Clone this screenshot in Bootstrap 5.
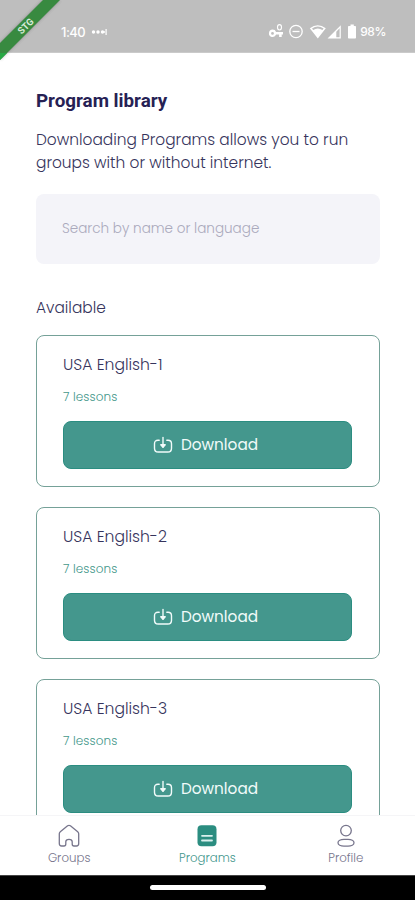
<!DOCTYPE html>
<html lang="en">
<head>
<meta charset="utf-8">
<meta name="viewport" content="width=device-width, initial-scale=1">
<title>Program library</title>
<link href="https://cdn.jsdelivr.net/npm/bootstrap@5.3.0/dist/css/bootstrap.min.css" rel="stylesheet">
<style>
  :root { --ink: #36345c; --teal: #44978d; --teal-dark: #2b8d81; }
  body { font-family: Poppins, Inter, sans-serif; font-weight: 300; color: var(--ink); }
  svg { display: block; flex: none; }
  .screen { height: 900px; }
  .status-bar { height: 53px; background: #bebebe; padding: 12px 29px 0 61px; border-bottom: 1px solid #cacaca; }
  .clock { font: 500 13px/1 Inter, sans-serif; letter-spacing: -.5px; width: 30px; }
  .battery-level { font: 500 12px/1 Inter, sans-serif; letter-spacing: -.4px; margin-left: 4px; }
  .ribbon { left: 0; top: 0; }
  .ribbon text { font: 700 9.5px Roboto, sans-serif; fill: #d9ead9; }
  .library { padding: 36px 35px 0 36px; min-height: 0; }
  .page-title { font: 700 18.8px/24px Roboto, sans-serif; color: #262154; margin-bottom: 15px; }
  .intro { font-size: 15.4px; line-height: 23px; margin-bottom: 20px; white-space: nowrap; }
  .search { height: 70px; border: 0; border-radius: 8px; background: #f4f4f9; padding: 0 26px 1px; font-size: 13.55px; font-weight: 300; margin-bottom: 32px; }
  .search:focus { background: #f4f4f9; }
  .search::placeholder { color: #aaa9bc; }
  .section-title { font-size: 15.4px; line-height: 24px; margin-bottom: 15px; }
  .program { height: 152px; border: 1px solid #75a198; border-radius: 8px; padding: 17px 27px 0 26px; margin-bottom: 20px; flex: none; }
  .program-name { font-size: 15.6px; line-height: 24px; font-weight: 300; margin-bottom: 11px; }
  .lessons { font-size: 12px; line-height: 18px; letter-spacing: .1px; color: #44978a; margin-bottom: 15px; }
  .btn-download { --bs-btn-color: #f1fbfa; --bs-btn-bg: var(--teal); --bs-btn-border-color: var(--teal-dark); --bs-btn-hover-color: #fff; --bs-btn-hover-bg: var(--teal-dark);
    --bs-btn-border-radius: 8px; height: 48px; font-size: 15.3px; font-weight: 400; padding: 0 4px 0 0; gap: 8px; }
  .tabs { height: 60px; border-top: 1px solid #f5f5f7; padding-top: 8px; flex: none; }
  .tab { font-size: 11.8px; line-height: 16px; color: #77758c; gap: 2px; text-decoration: none; }
  .tab.active { color: var(--teal); }
  .gesture-bar { height: 25px; flex: none; border-top: 1px solid #444; }
  .gesture-pill { width: 116px; height: 5px; margin-top: -2px; }
</style>
</head>
<body>
<svg class="d-none">
  <symbol id="download" viewBox="0 0 20 18">
    <g fill="none" stroke="currentColor" stroke-width="1.4" stroke-linecap="round" stroke-linejoin="round">
      <path d="M6.2 4.2H5C2.700 4.200 1.500 5.500 1.500 7.700V12.200C1.500 14.800 2.700 16 5.200 16H14.800C17.300 16 18.500 14.800 18.500 12.200V7.700C18.500 5.500 17.300 4.200 15 4.200H13.800"/>
      <path d="M10 1.500V11"/>
      <path d="M7.800 8.800H12.200L10 11.200z" fill="currentColor"/>
    </g>
  </symbol>
</svg>
<div class="screen d-flex flex-column overflow-hidden position-relative bg-white">
  <header class="status-bar d-flex align-items-center text-white flex-shrink-0">
    <span class="clock">1:40</span>
    <svg width="17" height="8" viewBox="0 0 17 8" fill="#fff"><circle cx="2.500" cy="4" r="1.700"/><circle cx="7" cy="4" r="1.700"/><circle cx="11.500" cy="4" r="1.700"/><path d="M13 3.300h1V4.700h-1zM14.500 1h1.200v6h-1.200z"/></svg>
    <svg class="ms-auto" width="88" height="18" viewBox="0 0 88 18" fill="#fff">
      <path fill-rule="evenodd" d="M4.500 6.600A3.700 3.700 0 0 1 8.100 9H15v2.600h-1.300V14h-2.600v-2.400h-3A3.700 3.700 0 1 1 4.500 6.600zM4.500 9a1.400 1.400 0 1 0 0 2.800 1.400 1.400 0 0 0 0-2.800z"/>
      <ellipse cx="11.500" cy="4.300" rx="2" ry="2.700" fill="none" stroke="#fff" stroke-width="1.100"/>
      <g fill="none" stroke="#fff" stroke-width="1.300"><circle cx="28" cy="8.500" r="6.200"/><path d="M24.500 8.500h7"/></g>
      <path fill-rule="evenodd" d="M41.800 5.200Q49.800-.8 57.800 5.200L49.800 15.500zM44 5.500L45.200 7Q49.800 3.900 54.400 7L55.600 5.500Q49.800 1.600 44 5.500z"/>
      <path fill-rule="evenodd" d="M59.500 15.500L72.800 2.200V15.500zM68.300 8.700V14.300H71.600V5.200z"/>
      <path d="M82.500 1.500h3.300v1.400h1.400q.8 0 .8.800v11q0 .8-.8.800h-6.400q-.8 0-.8-.8v-11q0-.8.8-.8h1.700z"/>
    </svg>
    <span class="battery-level">98%</span>
  </header>

  <svg class="ribbon position-absolute" width="64" height="64" viewBox="0 0 64 64">
    <defs><filter id="soft" x="-20%" y="-20%" width="140%" height="140%"><feGaussianBlur stdDeviation="1.800"/></filter></defs>
    <path d="M0 43L43 0H60L0 60z" fill="#555" opacity=".5" filter="url(#soft)"/>
    <path d="M0 43L43 0H60L0 60z" fill="#388a40"/>
    <path d="M0 53H7L0 60z" fill="#27a844"/>
    <text transform="translate(25.500 26.000) rotate(-45)" text-anchor="middle" dominant-baseline="central">STG</text>
  </svg>

  <main class="library flex-fill overflow-hidden d-flex flex-column">
    <h1 class="page-title">Program library</h1>
    <p class="intro">Downloading Programs allows you to run<br>groups with or without internet.</p>
    <input class="form-control search flex-shrink-0" type="search" placeholder="Search by name or language" aria-label="Search by name or language">
    <h2 class="section-title fw-light">Available</h2>
    <section class="card program">
      <h3 class="program-name">USA English-1</h3>
      <div class="lessons">7 lessons</div>
      <button class="btn btn-download d-flex align-items-center justify-content-center" type="button"><svg width="20" height="18"><use href="#download"/></svg><span>Download</span></button>
    </section>
    <section class="card program">
      <h3 class="program-name">USA English-2</h3>
      <div class="lessons">7 lessons</div>
      <button class="btn btn-download d-flex align-items-center justify-content-center" type="button"><svg width="20" height="18"><use href="#download"/></svg><span>Download</span></button>
    </section>
    <section class="card program">
      <h3 class="program-name">USA English-3</h3>
      <div class="lessons">7 lessons</div>
      <button class="btn btn-download d-flex align-items-center justify-content-center" type="button"><svg width="20" height="18"><use href="#download"/></svg><span>Download</span></button>
    </section>
  </main>

  <nav class="tabs row g-0 bg-white">
    <a class="tab col d-flex flex-column align-items-center" href="#">
      <svg width="24" height="24" viewBox="0 0 24 24" fill="none" stroke="currentColor" stroke-width="1.300" stroke-linejoin="round"><path d="M2.300 9.800Q2.300 8.500 3.300 7.700L10.600 1.800Q12 .8 13.400 1.800L20.700 7.700Q21.700 8.500 21.700 9.800V19.500Q21.700 22 19.400 22H17Q15.200 22 15.200 20V17.700Q15.200 15.300 12 15.300T8.800 17.700V20Q8.800 22 7 22H4.600Q2.300 22 2.300 19.500z"/></svg>
      <span>Groups</span>
    </a>
    <a class="tab active col d-flex flex-column align-items-center" href="#">
      <svg width="24" height="24" viewBox="0 0 24 24"><rect x="2.500" y="1.300" width="19" height="21" rx="4" fill="#2b8d80"/><path d="M7 11.800h10M7 16.500h10" stroke="#d9f0ed" stroke-width="1.800" stroke-linecap="round"/></svg>
      <span>Programs</span>
    </a>
    <a class="tab col d-flex flex-column align-items-center" href="#">
      <svg width="24" height="24" viewBox="0 0 24 24" fill="none" stroke="currentColor" stroke-width="1.300"><circle cx="12" cy="6.600" r="5.300"/><rect x="4" y="15.300" width="16" height="6.800" rx="6" ry="3.400"/></svg>
      <span>Profile</span>
    </a>
  </nav>
  <div class="gesture-bar bg-black d-flex align-items-center justify-content-center"><div class="gesture-pill bg-white rounded-pill"></div></div>
</div>
<script src="https://cdn.jsdelivr.net/npm/bootstrap@5.3.0/dist/js/bootstrap.bundle.min.js"></script>
</body>
</html>
